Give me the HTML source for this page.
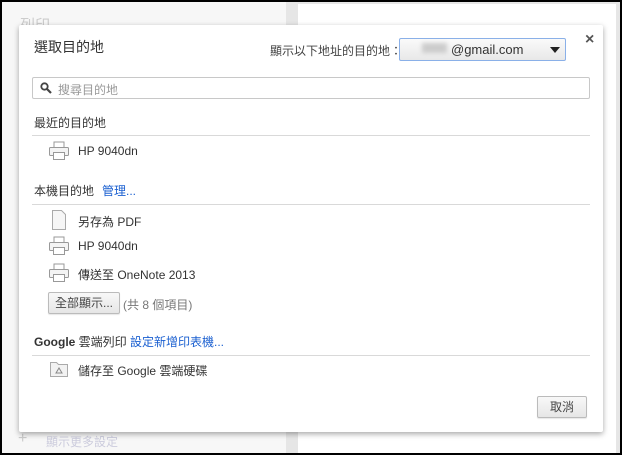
<!DOCTYPE html><html><head><meta charset="utf-8"><style>
body{margin:0;width:622px;height:455px;position:relative;overflow:hidden;font-family:"Liberation Sans","Noto Sans CJK TC",sans-serif;font-size:12px;color:#333;background:#000}
.bg{position:absolute;left:2px;top:2px;width:618px;height:451px;background:#e6e6e6}
.lp{position:absolute;left:0;top:0;width:284px;height:451px;background:#f7f7f7}
.pg{position:absolute;left:296px;top:2px;width:318px;height:449px;background:#fff}
.dlg{position:absolute;left:19px;top:25px;width:584px;height:407px;background:#fff;box-shadow:0 2px 6px rgba(0,0,0,.35);border-radius:2px}
.a{position:absolute;white-space:nowrap}
.hr{position:absolute;left:13px;width:558px;height:1px;background:#d9d9d9}
.btn{position:absolute;border:1px solid #bbb;border-radius:2px;background:linear-gradient(#f8f8f8,#e6e6e6);box-shadow:0 1px 1px rgba(0,0,0,.1);text-align:center;color:#444}
.lnk{color:#1a5fd0}
</style></head><body>
<div class="bg"><div class="lp"><div class="a" style="left:18px;top:12px;font-size:15px;color:#ccc">列印</div>
<div class="a" style="left:16px;top:428px;font-size:16px;color:#ccc">+</div><div class="a" style="left:44px;top:431px;color:#ccd">顯示更多設定</div></div>
<div class="pg"></div></div>
<div class="dlg">
<div class="a" style="left:15px;top:12px;font-size:14px;color:#333">選取目的地</div>
<div class="a" style="left:251px;top:17px;color:#444">顯示以下地址的目的地：</div>
<div class="a" style="left:380px;top:13px;width:165px;height:21px;border:1px solid #8ab0e8;border-radius:2px;background:linear-gradient(#fafafa,#e8e8e8)">
<span class="a" style="left:22px;top:4px;width:25px;height:10px;background:#ccc;filter:blur(2px)"></span>
<span class="a" style="left:51px;top:3px;font-size:13px;color:#333">@gmail.com</span>
<span class="a" style="left:150px;top:8px;border:5px solid transparent;border-top:6px solid #222;border-bottom:0"></span></div>
<div class="a" style="left:566px;top:6px;font-size:16px;font-weight:bold;color:#555">×</div>
<div class="a" style="left:13px;top:52px;width:556px;height:20px;border:1px solid #c8c8c8;border-radius:2px">
<svg class="a" style="left:7px;top:4px" width="12" height="12"><circle cx="4.5" cy="4.5" r="3.2" fill="none" stroke="#444" stroke-width="1.8"/><path d="M7 7l4 4" stroke="#444" stroke-width="2.2"/></svg>
<span class="a" style="left:25px;top:3px;color:#999">搜尋目的地</span></div>
<div class="a" style="left:15px;top:89px;color:#333">最近的目的地</div>
<div class="hr" style="top:110px"></div>
<svg class="a" style="left:29px;top:116px" width="22" height="20"><rect x="6" y="1" width="10" height="6" fill="#fff" stroke="#999"/><rect x="1.5" y="6.5" width="19" height="8" rx="1" fill="#f4f4f4" stroke="#999"/><rect x="5.5" y="11.5" width="11" height="7" fill="#fff" stroke="#999"/></svg>
<div class="a" style="left:59px;top:119px">HP 9040dn</div>
<div class="a" style="left:15px;top:157px">本機目的地</div><div class="a lnk" style="left:83px;top:157px">管理...</div>
<div class="hr" style="top:179px"></div>
<svg class="a" style="left:32px;top:185px" width="16" height="20"><path d="M1.5 .5h9l4 4v15h-13z" fill="#f6f6f6" stroke="#aaa"/></svg>
<div class="a" style="left:59px;top:188px">另存為 PDF</div>
<svg class="a" style="left:29px;top:211px" width="22" height="20"><rect x="6" y="1" width="10" height="6" fill="#fff" stroke="#999"/><rect x="1.5" y="6.5" width="19" height="8" rx="1" fill="#f4f4f4" stroke="#999"/><rect x="5.5" y="11.5" width="11" height="7" fill="#fff" stroke="#999"/></svg>
<div class="a" style="left:59px;top:214px">HP 9040dn</div>
<svg class="a" style="left:29px;top:238px" width="22" height="20"><rect x="6" y="1" width="10" height="6" fill="#fff" stroke="#999"/><rect x="1.5" y="6.5" width="19" height="8" rx="1" fill="#f4f4f4" stroke="#999"/><rect x="5.5" y="11.5" width="11" height="7" fill="#fff" stroke="#999"/></svg>
<div class="a" style="left:59px;top:241px">傳送至 OneNote 2013</div>
<div class="btn" style="left:29px;top:267px;width:70px;height:20px;line-height:20px">全部顯示...</div>
<div class="a" style="left:104px;top:271px;color:#777">(共 8 個項目)</div>
<div class="a" style="left:15px;top:308px;font-weight:bold;color:#333">Google <span style="font-weight:normal">雲端列印</span></div><div class="a lnk" style="left:111px;top:308px">設定新增印表機...</div>
<div class="hr" style="top:330px"></div>
<svg class="a" style="left:30px;top:335px" width="20" height="18"><path d="M1.5 2.5h6l2 2h9v12h-17z" fill="#f2f2f2" stroke="#aaa"/><path d="M7 13l3-5 3 5z" fill="none" stroke="#888"/></svg>
<div class="a" style="left:59px;top:337px">儲存至 Google 雲端硬碟</div>
<div class="btn" style="left:518px;top:371px;width:48px;height:20px;line-height:20px">取消</div>
</div>
</body></html>
